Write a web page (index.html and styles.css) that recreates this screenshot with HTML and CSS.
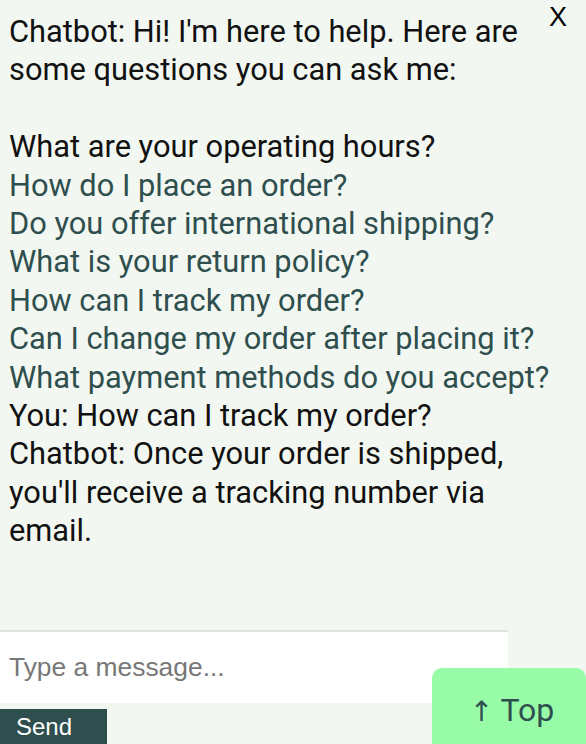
FILE: index.html
```html
<!DOCTYPE html>
<html>
<head>
<meta charset="utf-8">
<link rel="stylesheet" href="styles.css">
</head>
<body>
<div class="chat">
  <button class="close">X</button>
  <div class="messages">
    <div class="msg">Chatbot: Hi! I'm here to help. Here are some questions you can ask me:</div>
    <div class="blank"></div>
    <div class="q q-first">What are your operating hours?</div>
    <div class="q">How do I place an order?</div>
    <div class="q">Do you offer international shipping?</div>
    <div class="q">What is your return policy?</div>
    <div class="q">How can I track my order?</div>
    <div class="q">Can I change my order after placing it?</div>
    <div class="q">What payment methods do you accept?</div>
    <div class="msg">You: How can I track my order?</div>
    <div class="msg">Chatbot: Once your order is shipped, you'll receive a tracking number via email.</div>
  </div>
  <input class="input" type="text" placeholder="Type a message...">
  <button class="send">Send</button>
</div>
<button class="top"><span class="arrow">↑</span> Top</button>
</body>
</html>
```
FILE: styles.css
```css
html, body {
  margin: 0;
  padding: 0;
  background: #f3f7f1;
}
.chat {
  position: relative;
  width: 586px;
  height: 744px;
  overflow: hidden;
}
.close {
  position: absolute;
  top: 2px;
  right: 19px;
  background: none;
  border: none;
  padding: 0;
  font-family: "Liberation Sans", Arial, sans-serif;
  font-size: 27px;
  color: #000;
}
.messages {
  height: 630px;
  box-sizing: border-box;
  padding: 13px 22px 0 9px;
  font-family: Roboto, "Noto Sans", sans-serif;
  font-size: 30.8px;
  line-height: 38.4px;
  color: #111;
}
.blank {
  height: 38.4px;
}
.q {
  color: #2f4f4f;
}
.q-first {
  color: #111;
}
.input {
  display: block;
  width: 508px;
  height: 73px;
  box-sizing: border-box;
  margin: 0;
  border: none;
  border-top: 2px solid #e2e2dc;
  background: #fff;
  padding: 0 9px;
  font-family: "Liberation Sans", Arial, sans-serif;
  font-size: 26.4px;
  outline: none;
}
.input::placeholder {
  color: #777;
}
.send {
  display: block;
  margin-top: 6px;
  width: 107px;
  height: 40px;
  border: none;
  background: #2f4f4f;
  color: #fff;
  font-family: "Liberation Sans", Arial, sans-serif;
  font-size: 24px;
  text-align: left;
  padding: 0 0 4px 16px;
}
.top {
  position: fixed;
  right: 0;
  bottom: -10px;
  width: 154px;
  height: 86px;
  border: none;
  border-radius: 10px;
  background: #98fba8;
  color: #2f4f4f;
  font-family: Roboto, sans-serif;
  font-size: 32px;
  padding: 0 0 2px 6px;
}
.arrow {
  font-family: "DejaVu Sans", sans-serif;
  font-size: 28px;
}
```
